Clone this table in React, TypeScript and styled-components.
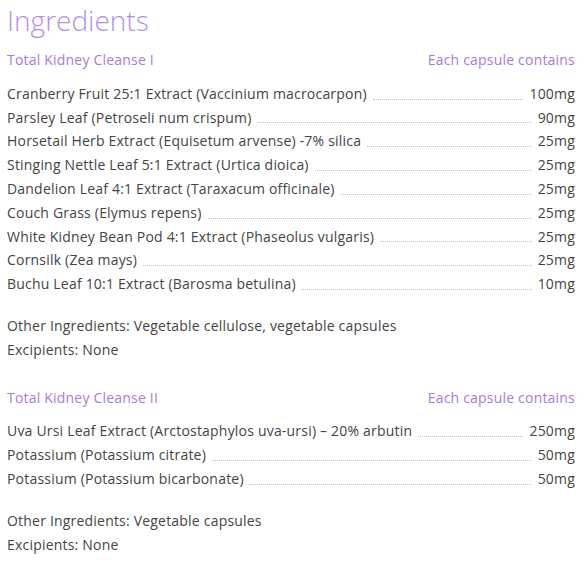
import { createGlobalStyle, styled } from 'styled-components';

interface IIngredient {
  name: string;
  amount: string;
}

interface ISection {
  title: string;
  items: IIngredient[];
  other: string;
  excipients: string;
}

const sections: ISection[] = [
  {
    title: 'Total Kidney Cleanse I',
    items: [
      { name: 'Cranberry Fruit 25:1 Extract (Vaccinium macrocarpon)', amount: '100mg' },
      { name: 'Parsley Leaf (Petroseli num crispum)', amount: '90mg' },
      { name: 'Horsetail Herb Extract (Equisetum arvense) -7% silica', amount: '25mg' },
      { name: 'Stinging Nettle Leaf 5:1 Extract (Urtica dioica)', amount: '25mg' },
      { name: 'Dandelion Leaf 4:1 Extract (Taraxacum officinale)', amount: '25mg' },
      { name: 'Couch Grass (Elymus repens)', amount: '25mg' },
      { name: 'White Kidney Bean Pod 4:1 Extract (Phaseolus vulgaris)', amount: '25mg' },
      { name: 'Cornsilk (Zea mays)', amount: '25mg' },
      { name: 'Buchu Leaf 10:1 Extract (Barosma betulina)', amount: '10mg' },
    ],
    other: 'Vegetable cellulose, vegetable capsules',
    excipients: 'None',
  },
  {
    title: 'Total Kidney Cleanse II',
    items: [
      { name: 'Uva Ursi Leaf Extract (Arctostaphylos uva-ursi) – 20% arbutin', amount: '250mg' },
      { name: 'Potassium (Potassium citrate)', amount: '50mg' },
      { name: 'Potassium (Potassium bicarbonate)', amount: '50mg' },
    ],
    other: 'Vegetable capsules',
    excipients: 'None',
  },
];

const GlobalStyle = createGlobalStyle`
  body {
    margin: 0;
    background: #fff;
    font-family: 'Open Sans', 'Noto Sans', sans-serif;
  }
`;

const Wrapper = styled.main`
  width: 568px;
  padding: 0 0 0 7px;
  color: #444;
  font-size: 14px;
  letter-spacing: 0.2px;
  line-height: 1.7;
`;

const Title = styled.h2`
  margin: 0;
  font-size: 28px;
  font-weight: 300;
  letter-spacing: 0;
  line-height: 40px;
  color: #b392e3;
`;

const Section = styled.section`
  margin-top: 8px;

  & + & {
    margin-top: 24px;
  }
`;

const SectionHead = styled.div`
  display: flex;
  justify-content: space-between;
  color: #a47ddb;
`;

const List = styled.ul`
  list-style: none;
  margin: 10px 0 0;
  padding: 0;
`;

const Row = styled.li`
  display: flex;
  align-items: flex-end;
`;

const Leader = styled.span`
  flex: 1;
  margin: 0 6px 6px;
  border-bottom: 1px dotted #c4c4c4;
`;

const Notes = styled.div`
  margin-top: 18px;
`;

const App = () => (
  <Wrapper>
    <GlobalStyle />
    <Title>Ingredients</Title>
    {sections.map((section) => (
      <Section key={section.title}>
        <SectionHead>
          <span>{section.title}</span>
          <span>Each capsule contains</span>
        </SectionHead>
        <List>
          {section.items.map((item) => (
            <Row key={item.name}>
              <span>{item.name}</span>
              <Leader />
              <span>{item.amount}</span>
            </Row>
          ))}
        </List>
        <Notes>
          <div>Other Ingredients: {section.other}</div>
          <div>Excipients: {section.excipients}</div>
        </Notes>
      </Section>
    ))}
  </Wrapper>
);

export default App;
